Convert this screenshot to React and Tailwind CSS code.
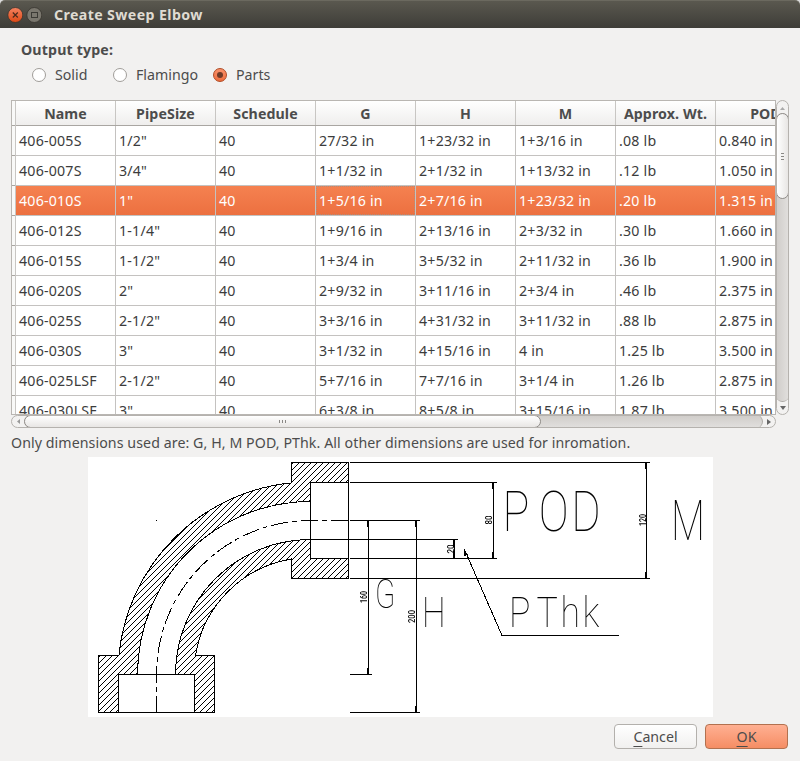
import React from 'react';

const columns = ['Name', 'PipeSize', 'Schedule', 'G', 'H', 'M', 'Approx. Wt.', 'POD'];

const rows = [
  ['406-005S', '1/2"', '40', '27/32 in', '1+23/32 in', '1+3/16 in', '.08 lb', '0.840 in'],
  ['406-007S', '3/4"', '40', '1+1/32 in', '2+1/32 in', '1+13/32 in', '.12 lb', '1.050 in'],
  ['406-010S', '1"', '40', '1+5/16 in', '2+7/16 in', '1+23/32 in', '.20 lb', '1.315 in'],
  ['406-012S', '1-1/4"', '40', '1+9/16 in', '2+13/16 in', '2+3/32 in', '.30 lb', '1.660 in'],
  ['406-015S', '1-1/2"', '40', '1+3/4 in', '3+5/32 in', '2+11/32 in', '.36 lb', '1.900 in'],
  ['406-020S', '2"', '40', '2+9/32 in', '3+11/16 in', '2+3/4 in', '.46 lb', '2.375 in'],
  ['406-025S', '2-1/2"', '40', '3+3/16 in', '4+31/32 in', '3+11/32 in', '.88 lb', '2.875 in'],
  ['406-030S', '3"', '40', '3+1/32 in', '4+15/16 in', '4 in', '1.25 lb', '3.500 in'],
  ['406-025LSF', '2-1/2"', '40', '5+7/16 in', '7+7/16 in', '3+1/4 in', '1.26 lb', '2.875 in'],
  ['406-030LSF', '3"', '40', '6+3/8 in', '8+5/8 in', '3+15/16 in', '1.87 lb', '3.500 in'],
];

const SELECTED = 2;

function TitleBar() {
  return (
    <div className="bg-[#dcdcdc]">
      <div className="flex h-7 items-center rounded-t-[5px] border-t border-[#6b695f] bg-linear-to-b from-[#5a584f] to-[#3e3d38] pl-[7px]">
        <svg className="block h-4 w-4" viewBox="0 0 16 16">
          <defs>
            <linearGradient id="close" x1="0" y1="0" x2="0" y2="1">
              <stop offset="0" stopColor="#f58361" />
              <stop offset="1" stopColor="#dd4814" />
            </linearGradient>
          </defs>
          <circle cx="8.3" cy="8" r="7.5" fill="url(#close)" stroke="#37352f" strokeWidth=".8" />
          <path d="M5.8 5.5l5 5M10.8 5.5l-5 5" stroke="#4b2a1c" strokeWidth="1.2" />
        </svg>
        <svg className="ml-[3px] block h-4 w-4" viewBox="0 0 16 16">
          <circle cx="8.3" cy="8" r="7.5" fill="#7a776e" stroke="#37352f" strokeWidth=".8" />
          <rect x="5.5" y="5.5" width="6" height="5" fill="none" stroke="#3b3a35" />
        </svg>
        <span className="ml-3 text-[14.2px] font-bold tracking-[0.38px] text-[#dfdbd2]">Create Sweep Elbow</span>
      </div>
    </div>
  );
}

function Radio({ label, checked, className }) {
  return (
    <label className={`flex items-center ${className}`}>
      {checked ? (
        <span className="flex size-[14px] items-center justify-center rounded-full border border-[#b04a23] bg-linear-to-b from-[#f9926b] to-[#ee6c3c]">
          <span className="size-[6px] rounded-full bg-[#6f3b28]" />
        </span>
      ) : (
        <span className="size-[14px] rounded-full border border-[#a09d99] bg-white" />
      )}
      <span className="ml-[9px]">{label}</span>
    </label>
  );
}

function Table() {
  return (
    <div className="flex h-[315px] w-[765px] overflow-hidden border border-[#b9b6b2] bg-white">
      <div className="w-1 shrink-0 border-r border-[#c8c6c3] bg-[#f9f9f8]">
        <div className="h-[25px] border-b border-[#a9a6a2]" />
        {rows.map((row) => (
          <div key={row[0]} className="h-[30px] border-b border-[#a9a6a2]" />
        ))}
      </div>
      <div className="w-[800px] shrink-0">
        <div className="flex h-[25px] border-b border-[#a9a6a2] bg-linear-to-b from-white to-[#efeeed]">
          {columns.map((c) => (
            <div key={c} className="w-[100px] border-r border-[#c8c6c3] text-center text-[14.2px] leading-[25px] font-bold tracking-[0.1px] whitespace-nowrap text-[#4c4c4c]">
              {c}
            </div>
          ))}
        </div>
        {rows.map((row, r) => (
          <div
            key={row[0]}
            className={
              r === SELECTED
                ? 'flex h-[30px] border-b border-[#c4c2c0] bg-linear-to-b from-[#f58150] to-[#ec7040] text-white'
                : 'flex h-[30px] border-b border-[#c4c2c0] text-[#3c3c3c]'
            }
          >
            {row.map((v, i) => (
              <div
                key={i}
                className="w-[100px] border-r border-[#c4c2c0] tracking-[0.2px] whitespace-nowrap"
              >
                <div
                  className={
                    r === SELECTED && i === 3
                      ? 'h-[29px] border border-dotted border-[#b58a78] pl-[2px] leading-[28px]'
                      : 'h-[29px] pl-[3px] leading-[30px]'
                  }
                >
                  {v}
                </div>
              </div>
            ))}
          </div>
        ))}
      </div>
    </div>
  );
}

function VerticalScrollbar() {
  return (
    <div className="flex h-[315px] w-[13px] flex-col items-center overflow-hidden rounded-[7px] border border-[#b5b2ae] bg-[#f3f2f1]">
      <div className="flex h-[12px] w-full shrink-0 items-end justify-center pb-[3px]">
        <svg className="h-[3px] w-[5px]" viewBox="0 0 5 3"><path d="M0 3L2.5 0L5 3z" fill="#aaa" /></svg>
      </div>
      <div className="h-[289px] w-[13px] shrink-0 rounded-[7px] border-b border-[#aaa7a3] bg-linear-to-r from-[#cfccc9] to-[#e2e0de]">
        <div className="flex h-[86px] w-[13px] flex-col items-center justify-center gap-[2px] rounded-[7px] border border-[#8f8c88] bg-linear-to-r from-white to-[#e8e6e4]">
          <div className="h-px w-[3px] bg-[#8a8885]" />
          <div className="h-px w-[3px] bg-[#8a8885]" />
          <div className="h-px w-[3px] bg-[#8a8885]" />
        </div>
      </div>
      <div className="flex flex-1 items-center justify-center">
        <svg className="h-[4px] w-[6px]" viewBox="0 0 6 4"><path d="M0 0L3 4L6 0z" fill="#666" /></svg>
      </div>
    </div>
  );
}

function HorizontalScrollbar() {
  return (
    <div className="flex h-[13px] w-[765px] items-center overflow-hidden rounded-[7px] border border-[#b5b2ae] bg-[#f3f2f1]">
      <div className="flex w-[12px] shrink-0 justify-center">
        <svg className="h-[5px] w-[3px]" viewBox="0 0 3 5"><path d="M3 0L0 2.5L3 5z" fill="#999" /></svg>
      </div>
      <div className="flex h-[13px] w-[739px] shrink-0 rounded-[7px] border-r border-[#aaa7a3] bg-linear-to-b from-[#cfccc9] to-[#e2e0de]">
        <div className="flex h-[13px] w-[517px] items-center justify-center gap-[2px] rounded-[7px] border border-[#8f8c88] bg-linear-to-b from-white to-[#e8e6e4]">
          <div className="h-[3px] w-px bg-[#8a8885]" />
          <div className="h-[3px] w-px bg-[#8a8885]" />
          <div className="h-[3px] w-px bg-[#8a8885]" />
        </div>
      </div>
      <div className="flex flex-1 justify-center">
        <svg className="h-[6px] w-[4px]" viewBox="0 0 4 6"><path d="M0 0L4 3L0 6z" fill="#666" /></svg>
      </div>
    </div>
  );
}

function ElbowDrawing() {
  return (
    <svg className="block h-[260px] w-[625px] bg-white" viewBox="88 457 625 260">
      <defs>
        <pattern id="hatch" width="6" height="6" patternUnits="userSpaceOnUse">
          <path
            d="M0 5h1v1H0zM1 4h1v1H1zM2 3h1v1H2zM3 2h1v1H3zM4 1h1v1H4zM5 0h1v1H5z"
            fill="#000"
            shapeRendering="crispEdges"
          />
        </pattern>
      </defs>
      <g stroke="#000" strokeWidth="1" fill="none" shapeRendering="crispEdges">
        {/* outer wall, from the lower socket round to the upper one */}
        <path
          fill="url(#hatch)"
          d="M98.5 712.5V655.5H118.9A192 192 0 0 1 291.5 482.9V462.5H348.5V482.5H310.5V501.5A173 173 0 0 0 137.5 674.5H118.5V712.5Z"
        />
        {/* inner wall */}
        <path
          fill="url(#hatch)"
          d="M194.5 712.5V674.5H175.5A135 135 0 0 1 310.5 539.5V558.5H348.5V578.5H291.5V559A116 116 0 0 0 195.5 655.5H214.5V712.5Z"
        />
        <path d="M310.5 482V559M348.5 462V579M118 674.5H195M98 712.5H215" />
        {/* centre line */}
        <path strokeDasharray="17 4 5 4" d="M156.5 712.5V674.5A154 154 0 0 1 310.5 520.5H348" />
        <path d="M156 520.5h1" />
        {/* extension lines */}
        <path d="M350 462.5H650M350 482.5H497M350 520.5H420M310 539.5H458M350 558.5H497M350 578.5H650M350 674.5H372M350 712.5H420" />
        {/* dimension lines */}
        <path d="M646.5 462V578M493.5 482V558M454.5 539V558M368.5 520V674M416.5 520V712" />
        <path d="M464.5 549.5L502 635.5H619" />
      </g>
      <g fill="#000" shapeRendering="crispEdges">
        <path d="M645 463h2v6h-2zM645 572h2v6h-2zM492 483h2v6h-2zM492 552h2v6h-2zM367 521h2v6h-2zM367 668h2v6h-2zM415 521h2v6h-2zM415 706h2v6h-2zM453 540h2v7h-2zM453 551h2v7h-2z" />
        <path d="M464 549L464 556L468 555z" />
      </g>
      <g className="font-['Roboto'] opacity-99" fontWeight="100" fill="#000">
        <text transform="translate(500 531) scale(.8 1)" fontSize="56" x="3 48.3 89">POD</text>
        <text transform="translate(671 540) scale(.72 1)" fontSize="55">M</text>
        <text transform="translate(375 608) scale(.72 1)" fontSize="41">G</text>
        <text transform="translate(422 627) scale(.8 1)" fontSize="42">H</text>
        <text transform="translate(509 627) scale(.85 1)" fontSize="42" x="0 32.4 60.6 86.5">PThk</text>
      </g>
      <g className="font-['Roboto'] opacity-99" fontSize="9.5" fontWeight="500" fill="#000" textAnchor="middle">
        <text transform="translate(367 597) rotate(-90)" textLength="12" lengthAdjust="spacingAndGlyphs">160</text>
        <text transform="translate(415 616.5) rotate(-90)" textLength="13" lengthAdjust="spacingAndGlyphs">200</text>
        <text transform="translate(492 520) rotate(-90)" textLength="9" lengthAdjust="spacingAndGlyphs">80</text>
        <text transform="translate(454 549) rotate(-90)" textLength="9" lengthAdjust="spacingAndGlyphs">20</text>
        <text transform="translate(646 520) rotate(-90)" textLength="12" lengthAdjust="spacingAndGlyphs">120</text>
      </g>
    </svg>
  );
}

export default function App() {
  return (
    <div className="flex h-[761px] w-[800px] flex-col overflow-hidden bg-[#f2f1f0] font-['Noto_Sans',sans-serif] text-[14.2px] text-[#4c4c4c]">
      <TitleBar />
      <div className="flex flex-col pt-3 pl-[11px]">
        <div className="ml-[10px] h-5 leading-5 font-bold tracking-[0.15px]">Output type:</div>
        <div className="ml-[21px] flex h-[30px] items-center">
          <Radio label="Solid" className="w-[81px]" />
          <Radio label="Flamingo" className="w-[100px]" />
          <Radio label="Parts" checked />
        </div>
        <div className="mt-[10px] flex">
          <Table />
          <VerticalScrollbar />
        </div>
        <HorizontalScrollbar />
        <div className="mt-[4px] h-[25px] leading-[22px] tracking-[0.075px] whitespace-nowrap">
          Only dimensions used are: G, H, M POD, PThk. All other dimensions are used for inromation.
        </div>
        <div className="ml-[77px]">
          <ElbowDrawing />
        </div>
        <div className="mt-[7px] mr-3 flex justify-end gap-2">
          <button className="h-[25px] w-[83px] rounded border border-[#b3b0ac] bg-linear-to-b from-white to-[#f1f0ef] leading-[23px]">
            <span className="underline underline-offset-4">C</span>ancel
          </button>
          <button className="h-[25px] w-[83px] rounded border border-[#b2714f] bg-linear-to-b from-[#ffb092] to-[#f58d64] leading-[23px]">
            <span className="underline underline-offset-4">O</span>K
          </button>
        </div>
      </div>
    </div>
  );
}
